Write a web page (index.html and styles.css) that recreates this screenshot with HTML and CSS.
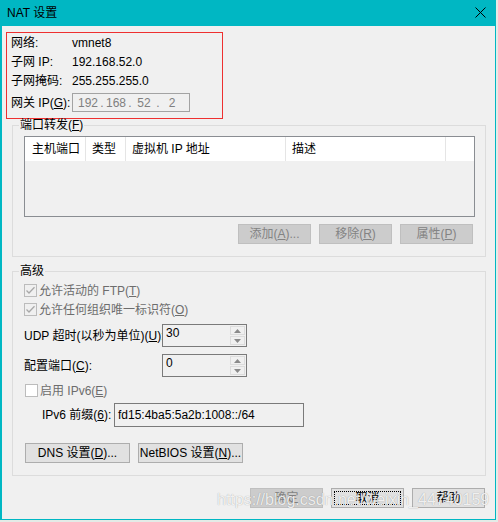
FILE: index.html
```html
<!DOCTYPE html>
<html lang="zh-CN">
<head>
<meta charset="utf-8">
<title>NAT 设置</title>
<link rel="stylesheet" href="styles.css">
</head>
<body>
<div class="window">
  <div class="titlebar">
    <span class="title">NAT 设置</span>
    <svg class="close" width="11" height="11" viewBox="0 0 11 11"><path d="M0.5 0.5 L10.5 10.5 M10.5 0.5 L0.5 10.5" stroke="#000" stroke-width="1" fill="none"/></svg>
  </div>
  <div class="body">
    <div class="info">
      <div class="row"><span class="lbl">网络:</span><span>vmnet8</span></div>
      <div class="row"><span class="lbl">子网 IP:</span><span>192.168.52.0</span></div>
      <div class="row"><span class="lbl">子网掩码:</span><span>255.255.255.0</span></div>
      <div class="row gw"><span class="lbl">网关 IP(<u>G</u>):</span>
        <div class="ipbox"><span>192</span><i>.</i><span>168</span><i>.</i><span>52</span><i>.</i><span>2</span></div>
      </div>
    </div>

    <fieldset class="group pf">
      <legend>端口转发(<u>F</u>)</legend>
      <div class="list">
        <div class="lhead">
          <div class="col c1">主机端口</div>
          <div class="col c2">类型</div>
          <div class="col c3">虚拟机 IP 地址</div>
          <div class="col c4">描述</div>
          <div class="col c5"></div>
        </div>
      </div>
      <div class="btnrow">
        <button class="btn" disabled>添加(<u>A</u>)...</button>
        <button class="btn" disabled>移除(<u>R</u>)</button>
        <button class="btn" disabled>属性(<u>P</u>)</button>
      </div>
    </fieldset>

    <fieldset class="group adv">
      <legend>高级</legend>
      <div class="cbrow dis">
        <svg class="cb" width="13" height="13" viewBox="0 0 13 13"><rect x="0.5" y="0.5" width="12" height="12" fill="#f0f0f0" stroke="#bcbcbc"/><path d="M2.5 6.5 L5 9 L10.5 3.2" fill="none" stroke="#a8a8a8" stroke-width="1.3"/></svg>
        <span>允许活动的 FTP(<u>T</u>)</span>
      </div>
      <div class="cbrow dis">
        <svg class="cb" width="13" height="13" viewBox="0 0 13 13"><rect x="0.5" y="0.5" width="12" height="12" fill="#f0f0f0" stroke="#bcbcbc"/><path d="M2.5 6.5 L5 9 L10.5 3.2" fill="none" stroke="#a8a8a8" stroke-width="1.3"/></svg>
        <span>允许任何组织唯一标识符(<u>O</u>)</span>
      </div>
      <div class="spinrow first">
        <span class="slbl">UDP 超时(以秒为单位)(<u>U</u>):</span>
        <div class="spin">
          <span class="val">30</span>
          <div class="arrows">
            <div class="arr up"><svg width="7" height="4" viewBox="0 0 7 4"><path d="M0 4 L3.5 0 L7 4 Z" fill="#8a8a8a"/></svg></div>
            <div class="arr"><svg width="7" height="4" viewBox="0 0 7 4"><path d="M0 0 L3.5 4 L7 0 Z" fill="#8a8a8a"/></svg></div>
          </div>
        </div>
      </div>
      <div class="spinrow second">
        <span class="slbl">配置端口(<u>C</u>):</span>
        <div class="spin">
          <span class="val">0</span>
          <div class="arrows">
            <div class="arr up"><svg width="7" height="4" viewBox="0 0 7 4"><path d="M0 4 L3.5 0 L7 4 Z" fill="#8a8a8a"/></svg></div>
            <div class="arr"><svg width="7" height="4" viewBox="0 0 7 4"><path d="M0 0 L3.5 4 L7 0 Z" fill="#8a8a8a"/></svg></div>
          </div>
        </div>
      </div>
      <div class="cbrow dis v6">
        <svg class="cb" width="13" height="13" viewBox="0 0 13 13"><rect x="0.5" y="0.5" width="12" height="12" fill="#ffffff" stroke="#bcbcbc"/></svg>
        <span>启用 IPv6(<u>E</u>)</span>
      </div>
      <div class="prefixrow">
        <span class="plbl">IPv6 前缀(<u>6</u>):</span>
        <div class="pinput">fd15:4ba5:5a2b:1008::/64</div>
      </div>
      <div class="dnsrow">
        <button class="btn wide">DNS 设置(<u>D</u>)...</button>
        <button class="btn wide">NetBIOS 设置(<u>N</u>)...</button>
      </div>
    </fieldset>

    <div class="footer">
      <button class="btn" disabled>确定</button>
      <button class="btn focus">取消</button>
      <button class="btn">帮助</button>
    </div>
  </div>
</div>
<div class="watermark">https://blog.csdn.net/weixin_44740159</div>
</body>
</html>
```

FILE: styles.css
```css
html, body {
  margin: 0;
  padding: 0;
}
body {
  width: 498px;
  height: 522px;
  background: #e4ebe7;
  font-family: "Liberation Sans", "Noto Sans CJK SC", sans-serif;
  font-size: 12px;
  color: #000;
  position: relative;
  overflow: hidden;
}
u { text-decoration: underline; text-underline-offset: 1px; }

.window {
  width: 496px;
  height: 520px;
  display: flex;
  flex-direction: column;
}
.titlebar {
  height: 26px;
  flex: none;
  background: #00b7c3;
  display: flex;
  align-items: center;
  justify-content: space-between;
  padding: 0 10px 0 7px;
}
.title {
  font-size: 12px;
  line-height: 14px;
}
.close { display: block; margin-top: -1px; }

.body {
  flex: 1;
  background: #f0f0f0;
  border-left: 2px solid #00b7c3;
  border-right: 1px solid #00b7c3;
  border-bottom: 1px solid #00b7c3;
  display: flex;
  flex-direction: column;
  overflow: hidden;
}

/* info box */
.info {
  margin: 6px 0 0 4px;
  width: 217px;
  height: 87px;
  box-sizing: border-box;
  border: 1px solid #ee3030;
  padding: 0 0 0 4px;
}
.row {
  height: 19px;
  display: flex;
  align-items: center;
  line-height: 14px;
}
.row .lbl { width: 61px; flex: none; }
.row.gw { margin-top: 3px; }
.ipbox {
  width: 118px;
  height: 19px;
  box-sizing: border-box;
  border: 1px solid #a3a3a3;
  display: flex;
  align-items: center;
  padding-left: 4px;
  color: #808080;
}
.ipbox span { width: 22px; text-align: center; }
.ipbox i { width: 6px; text-align: center; font-style: normal; }

/* group boxes */
.group {
  margin: 0 0 0 10px;
  width: 474px;
  box-sizing: border-box;
  border: 1px solid #dcdcdc;
  padding: 5px 10px 12px 11px;
  min-width: 0;
}
.group legend {
  padding: 0 1px;
  margin-left: -5px;
  font-size: 12px;
  line-height: 12px;
  height: 12px;
}
.adv { margin-top: 8px; padding-top: 4px; }

/* list */
.list {
  width: 451px;
  height: 81px;
  box-sizing: border-box;
  border: 1px solid #8a8d92;
  background: #f0f0f0;
}
.lhead {
  height: 24px;
  background: #fff;
  display: flex;
}
.col {
  box-sizing: border-box;
  border-right: 1px solid #e5e5e5;
  padding-left: 6px;
  line-height: 24px;
  white-space: nowrap;
}
.c1 { width: 61px; padding-left: 7px; }
.c2 { width: 40px; }
.c3 { width: 160px; }
.c4 { width: 160px; }
.c5 { flex: 1; border-right: none; }

.btnrow {
  margin-top: 7px;
  display: flex;
  justify-content: flex-end;
  gap: 8px;
  padding-right: 2px;
}

/* buttons */
.btn {
  width: 73px;
  height: 20px;
  box-sizing: border-box;
  margin: 0;
  padding: 0;
  border: 1px solid #adadad;
  background: #e1e1e1;
  font-family: "Liberation Sans", "Noto Sans CJK SC", sans-serif;
  font-size: 12px;
  line-height: 16px;
  color: #000;
  white-space: nowrap;
}
.btn:disabled {
  background: #cccccc;
  border-color: #bfbfbf;
  color: #838383;
}
.btn.focus {
  outline: 1px dotted #000;
  outline-offset: -4px;
}
.btn.wide { width: 105px; }

/* checkbox rows */
.cbrow {
  height: 19px;
  display: flex;
  align-items: center;
  gap: 2px;
  line-height: 14px;
}
.cbrow.dis { color: #6d6d6d; }
.cb { display: block; flex: none; }
.cbrow.v6 { margin-top: 4px; margin-left: 1px; }

/* spinners */
.spinrow {
  display: flex;
  align-items: center;
}
.spinrow.first { margin-top: 5px; }
.spinrow.second { margin-top: 7px; }
.slbl { width: 138px; flex: none; line-height: 14px; white-space: nowrap; }
.spin {
  width: 85px;
  height: 23px;
  box-sizing: border-box;
  border: 1px solid #7a7a7a;
  background: #f0f0f0;
  display: flex;
}
.val {
  flex: 1;
  padding-left: 3px;
  line-height: 16px;
}
.arrows {
  width: 17px;
  display: flex;
  flex-direction: column;
  padding: 1px;
  box-sizing: border-box;
  gap: 1px;
}
.arr {
  flex: 1;
  display: flex;
  align-items: center;
  justify-content: center;
  border: 1px solid #dcdcdc;
  background: #f0f0f0;
}
.arr svg { display: block; }

/* ipv6 prefix */
.prefixrow {
  margin-top: 3px;
  margin-left: 18px;
  display: flex;
  align-items: center;
}
.plbl { width: 72px; flex: none; line-height: 14px; white-space: nowrap; }
.pinput {
  width: 190px;
  height: 24px;
  box-sizing: border-box;
  border: 1px solid #7a7a7a;
  background: #f0f0f0;
  padding-left: 3px;
  line-height: 22px;
}

.dnsrow {
  margin-top: 16px;
  margin-left: 1px;
  display: flex;
  gap: 8px;
}

/* footer */
.footer {
  margin-top: 12px;
  display: flex;
  justify-content: flex-end;
  gap: 8px;
  padding-right: 10px;
}

/* watermark overlay */
.watermark {
  position: absolute;
  left: 217px;
  top: 491px;
  font-family: "Liberation Sans", sans-serif;
  font-size: 16px;
  color: rgba(255, 255, 255, 0.85);
  text-shadow: 0 0 1px rgba(0, 0, 0, 0.35);
  white-space: nowrap;
  pointer-events: none;
}
```
